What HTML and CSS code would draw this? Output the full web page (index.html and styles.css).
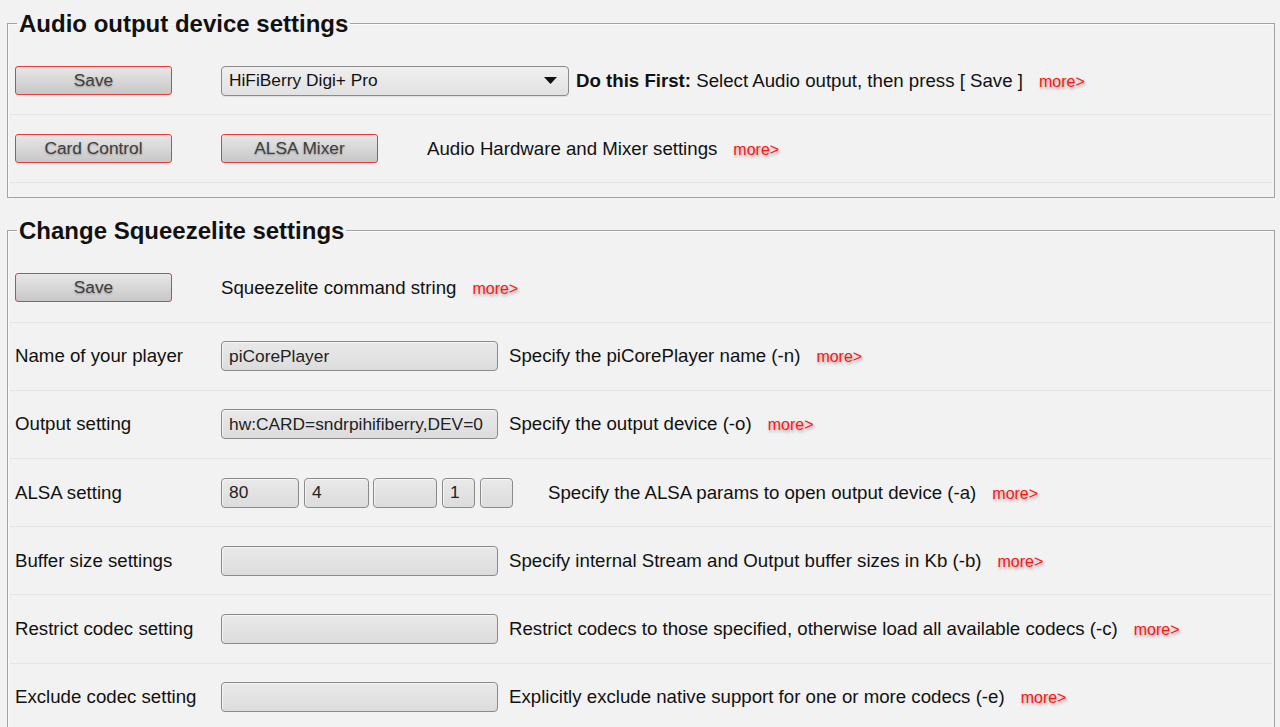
FILE: index.html
```html
<!DOCTYPE html>
<html lang="en">
<head>
<meta charset="utf-8">
<title>piCorePlayer - Squeezelite settings</title>
<link rel="stylesheet" href="styles.css">
</head>
<body>
<fieldset class="panel panel-first">
  <legend class="legend">Audio output device settings</legend>
  <div class="row">
    <div class="cell-label"><button class="btn" type="button">Save</button></div>
    <div class="cell-field cell-select">
      <div class="select">
        <span class="select-text">HiFiBerry Digi+ Pro</span>
        <svg class="select-arrow" width="13" height="7" viewBox="0 0 13 7"><path d="M0 0H13L6.5 7Z" fill="#111"/></svg>
      </div>
    </div>
    <div class="cell-desc"><b>Do this First:</b> Select Audio output, then press [ Save ]<span class="more">more&gt;</span></div>
  </div>
  <div class="row">
    <div class="cell-label"><button class="btn" type="button">Card Control</button></div>
    <div class="cell-field"><button class="btn" type="button">ALSA Mixer</button></div>
    <div class="cell-desc">Audio Hardware and Mixer settings<span class="more">more&gt;</span></div>
  </div>
</fieldset>

<fieldset class="panel panel-second">
  <legend class="legend">Change Squeezelite settings</legend>
  <div class="row">
    <div class="cell-label"><button class="btn" type="button">Save</button></div>
    <div class="cell-desc">Squeezelite command string<span class="more">more&gt;</span></div>
  </div>
  <div class="row">
    <div class="cell-label">Name of your player</div>
    <div class="cell-field cell-input"><div class="input">piCorePlayer</div></div>
    <div class="cell-desc">Specify the piCorePlayer name (-n)<span class="more">more&gt;</span></div>
  </div>
  <div class="row">
    <div class="cell-label">Output setting</div>
    <div class="cell-field cell-input"><div class="input">hw:CARD=sndrpihifiberry,DEV=0</div></div>
    <div class="cell-desc">Specify the output device (-o)<span class="more">more&gt;</span></div>
  </div>
  <div class="row">
    <div class="cell-label">ALSA setting</div>
    <div class="cell-field cell-alsa">
      <div class="input input-a1">80</div>
      <div class="input input-a2">4</div>
      <div class="input input-a3"></div>
      <div class="input input-a4">1</div>
      <div class="input input-a5"></div>
    </div>
    <div class="cell-desc">Specify the ALSA params to open output device (-a)<span class="more">more&gt;</span></div>
  </div>
  <div class="row">
    <div class="cell-label">Buffer size settings</div>
    <div class="cell-field cell-input"><div class="input"></div></div>
    <div class="cell-desc">Specify internal Stream and Output buffer sizes in Kb (-b)<span class="more">more&gt;</span></div>
  </div>
  <div class="row">
    <div class="cell-label">Restrict codec setting</div>
    <div class="cell-field cell-input"><div class="input"></div></div>
    <div class="cell-desc">Restrict codecs to those specified, otherwise load all available codecs (-c)<span class="more">more&gt;</span></div>
  </div>
  <div class="row">
    <div class="cell-label">Exclude codec setting</div>
    <div class="cell-field cell-input"><div class="input"></div></div>
    <div class="cell-desc">Explicitly exclude native support for one or more codecs (-e)<span class="more">more&gt;</span></div>
  </div>
</fieldset>
</body>
</html>
```

FILE: styles.css
```css
html, body {
  margin: 0;
  padding: 0;
}

body {
  background: #f2f2f2;
  font-family: "Liberation Sans", Arial, sans-serif;
  font-size: 18.67px;
  color: #111;
  overflow: hidden;
}

.panel {
  margin: 10px 5px 0 7px;
  padding: 10px 2px 14px 2px;
  border: 1px solid #a3a3a3;
  box-shadow: inset 1px 1px 0 #fbfbfb;
  min-width: 0;
}

.panel-second {
  margin-top: 19px;
}

.legend {
  margin-left: 7px;
  padding: 0 2px;
  font-size: 24px;
  line-height: 27px;
  font-weight: bold;
  color: #111;
}

.row {
  display: flex;
  align-items: center;
  height: 67.2px;
  padding-left: 5px;
  border-bottom: 1px solid #e5e5e5;
  white-space: nowrap;
}

.cell-label {
  flex: 0 0 206px;
  display: flex;
  align-items: center;
}

.cell-field {
  min-width: 206px;
  display: flex;
  align-items: center;
}

.cell-select {
  padding-right: 7px;
}

.cell-input {
  padding-right: 11px;
}

.cell-alsa {
  flex: 0 0 327px;
  gap: 5px;
}

.cell-desc {
  color: #111;
}

.more {
  margin-left: 16px;
  font-size: 16px;
  color: #ff1414;
  text-shadow: 1px 2px 3px rgba(0, 0, 0, 0.35);
}

.btn {
  width: 157px;
  height: 29px;
  padding: 0;
  border: 1px solid #ec3a3a;
  border-radius: 3px;
  background: linear-gradient(#e7e7e7, #c7c7c7);
  font-family: "Liberation Sans", Arial, sans-serif;
  font-size: 17.33px;
  color: #3f3f3f;
  text-shadow: 0 1px 2px rgba(0, 0, 0, 0.3);
}

.select {
  box-sizing: border-box;
  width: 348px;
  height: 30px;
  display: flex;
  align-items: center;
  justify-content: space-between;
  padding: 0 11px 0 7px;
  border: 1.5px solid #8a8a8a;
  border-radius: 4px;
  background: linear-gradient(#efefef, #e1e1e1);
  box-shadow: 0 1px 1px rgba(0, 0, 0, 0.08);
  font-size: 17.33px;
}

.select-text {
  color: #111;
}

.select-arrow {
  display: block;
}

.input {
  box-sizing: border-box;
  width: 277px;
  height: 30px;
  display: flex;
  align-items: center;
  padding: 0 7px;
  border: 1.5px solid #8a8a8a;
  border-radius: 4px;
  background: linear-gradient(#e9e9e9, #dcdcdc);
  box-shadow: inset 1px 1px 1px rgba(255, 255, 255, 0.6);
  font-size: 17.33px;
  color: #222;
  overflow: hidden;
}

.input-a1 { width: 78px; }
.input-a2 { width: 65px; }
.input-a3 { width: 64px; margin-left: -1px; }
.input-a4 { width: 33px; }
.input-a5 { width: 33px; }
```
